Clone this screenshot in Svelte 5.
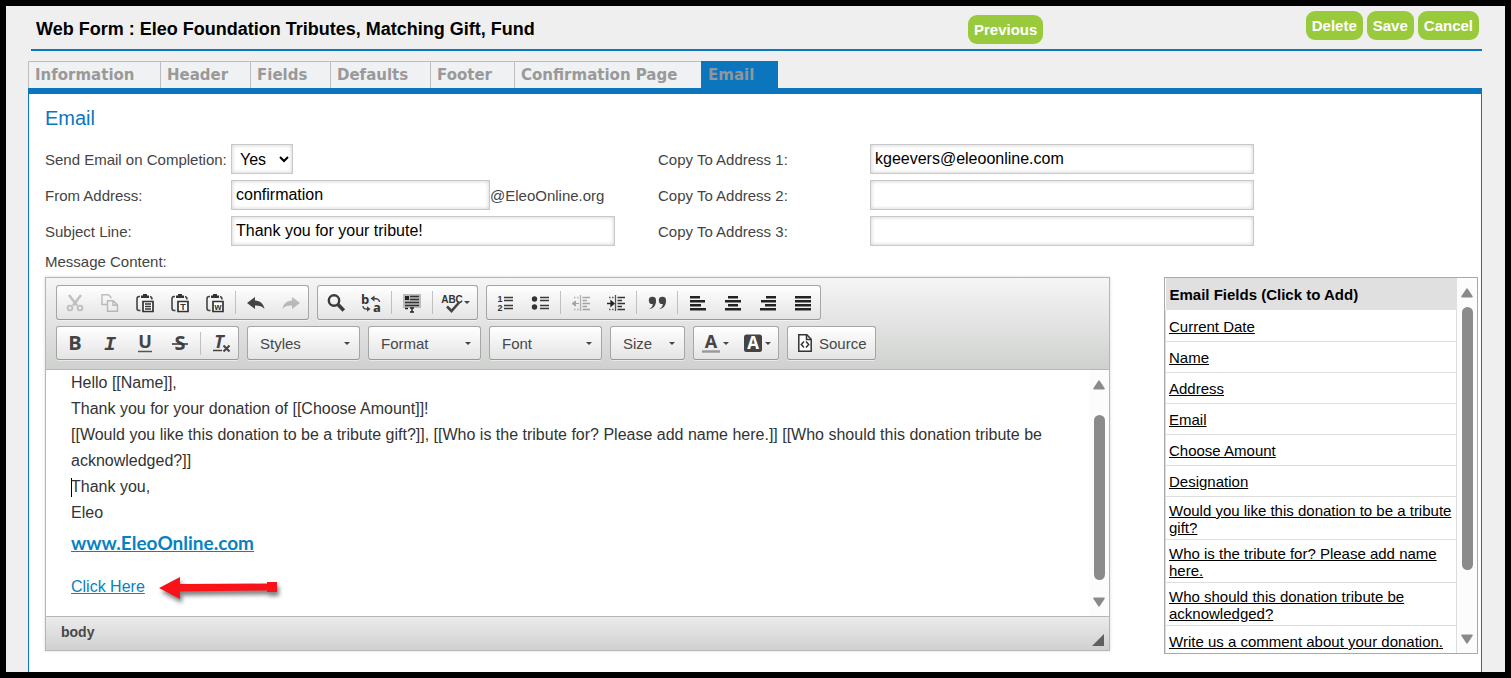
<script>
  const tabs = ['Information', 'Header', 'Fields', 'Defaults', 'Footer', 'Confirmation Page', 'Email'];
  const widths = [132, 90, 80, 100, 84, 187, 77];
  const fields = [
    'Current Date',
    'Name',
    'Address',
    'Email',
    'Choose Amount',
    'Designation',
    'Would you like this donation to be a tribute gift?',
    'Who is the tribute for? Please add name here.',
    'Who should this donation tribute be acknowledged?',
    'Write us a comment about your donation.'
  ];
  const aligns = [
    { name: 'Align left', rows: [[2, 10], [2, 15], [2, 11], [2, 16]] },
    { name: 'Center', rows: [[5, 10], [2, 16], [5, 10], [2, 16]] },
    { name: 'Align right', rows: [[8, 10], [3, 15], [7, 11], [2, 16]] },
    { name: 'Justify', rows: [[2, 16], [2, 16], [2, 16], [2, 16]] }
  ];
  const combos = ['Styles', 'Format', 'Font', 'Size'];
  const copies = [
    { id: 'copy1', label: 'Copy To Address 1:', value: 'kgeevers@eleoonline.com' },
    { id: 'copy2', label: 'Copy To Address 2:', value: '' },
    { id: 'copy3', label: 'Copy To Address 3:', value: '' }
  ];
  const tribute =
    '[[Would you like this donation to be a tribute gift?]], [[Who is the tribute for? Please add name here.]] [[Who should this donation tribute be acknowledged?]]';
</script>

{#snippet sep()}<span class="sep"></span>{/snippet}

{#snippet clipboard()}
  <path d="M5 3.5H4.2Q2 3.5 2 6v9q0 2.5 2 2.5h1.5M15 3.5q2 .3 2 3" fill="none" stroke="#444" stroke-width="1.6" />
  <path d="M6 5V2.6h2V1h4v1.6h2V5z" fill="#333" />
{/snippet}

{#snippet scrollbar()}
  <div class="scrollbar" aria-hidden="true">
    <svg width="12" height="10" viewBox="0 0 12 10"><path d="M6 1.2 11 8.6H1z" fill="#8a8a8a" stroke="#8a8a8a" stroke-width="1.6" stroke-linejoin="round" /></svg>
    <span class="thumb"></span>
    <svg width="12" height="10" viewBox="0 0 12 10"><path d="M1 1.4h10L6 8.8z" fill="#8a8a8a" stroke="#8a8a8a" stroke-width="1.6" stroke-linejoin="round" /></svg>
  </div>
{/snippet}

<div class="page">
  <header>
    <h1>Web Form : Eleo Foundation Tributes, Matching Gift, Fund</h1>
    <div class="middle"><button class="pill">Previous</button></div>
    <div class="actions">
      <button class="pill">Delete</button>
      <button class="pill">Save</button>
      <button class="pill">Cancel</button>
    </div>
  </header>

  <nav>
    {#each tabs as tab, i}
      <a href="#{tab}" class:active={tab === 'Email'} style="width: {widths[i]}px">{tab}</a>
    {/each}
  </nav>

  <main>
    <h2>Email</h2>
    <div class="form">
      <div class="rows">
        <div class="row">
          <label for="send">Send Email on Completion:</label>
          <select id="send"><option>Yes</option><option>No</option></select>
        </div>
        <div class="row">
          <label for="from">From Address:</label>
          <input id="from" class="short" value="confirmation" /><span>@EleoOnline.org</span>
        </div>
        <div class="row">
          <label for="subject">Subject Line:</label>
          <input id="subject" value="Thank you for your tribute!" />
        </div>
      </div>
      <div class="rows copies">
        {#each copies as c}
          <div class="row">
            <label for={c.id}>{c.label}</label>
            <input id={c.id} value={c.value} />
          </div>
        {/each}
      </div>
    </div>
    <div class="caption" id="message-label">Message Content:</div>

    <div class="work">
      <section class="editor">
        <div class="toolbar">
          <div class="tools">
            <div class="group">
              <button aria-label="Cut" class="off">
                <svg viewBox="0 0 20 20"><path d="M4 2l8 10.500M16 2 8 12.500" fill="none" stroke="#777" stroke-width="2.600" /><circle cx="5" cy="15" r="2.400" fill="none" stroke="#777" stroke-width="1.800" /><circle cx="15" cy="15" r="2.400" fill="none" stroke="#777" stroke-width="1.800" /></svg>
              </button>
              <button aria-label="Copy" class="off">
                <svg viewBox="0 0 20 20"><path d="M7 11.500H2V1.700h6.500L11.500 5M7.500 7.700h5.700l4.300 4.200v6.400h-10zM13 8v4.200h4.300" fill="none" stroke="#666" stroke-width="1.400" /></svg>
              </button>
              <button aria-label="Paste">
                <svg viewBox="0 0 20 20">{@render clipboard()}<path d="M8 8.500h10v10H8z" fill="#fff" stroke="#333" stroke-width="1.700" /><path d="M10 11h6M10 13.500h6M10 16h6" stroke="#333" stroke-width="1.300" /></svg>
              </button>
              <button aria-label="Paste as plain text">
                <svg viewBox="0 0 20 20">{@render clipboard()}<path d="M8 8.500h10v10H8z" fill="#fff" stroke="#333" stroke-width="1.700" /><text x="13" y="17" class="tiny">T</text></svg>
              </button>
              <button aria-label="Paste from Word">
                <svg viewBox="0 0 20 20">{@render clipboard()}<path d="M8 8.500h10v10H8z" fill="#fff" stroke="#333" stroke-width="1.700" /><text x="13" y="17" class="tiny">w</text></svg>
              </button>
              {@render sep()}
              <button aria-label="Undo">
                <svg viewBox="0 0 20 20"><path d="M1 10 9 4v3.600c5 .2 8.500 3 9.500 8.400C16 13 13 12.300 9 12.400V16z" fill="#444" /></svg>
              </button>
              <button aria-label="Redo" class="off">
                <svg viewBox="0 0 20 20"><path d="M19 10 11 4v3.600c-5 .2-8.500 3-9.500 8.400C4 13 7 12.300 11 12.400V16z" fill="#666" /></svg>
              </button>
            </div>

            <div class="group">
              <button aria-label="Find">
                <svg viewBox="0 0 20 20"><circle cx="8" cy="7.500" r="5.200" fill="none" stroke="#3c3c3c" stroke-width="2.400" /><path d="M12 11.500l5.800 6" stroke="#3c3c3c" stroke-width="3.600" /></svg>
              </button>
              <button aria-label="Replace">
                <svg viewBox="0 0 20 20"><text x="4" y="11" class="swap">b</text><text x="16" y="19" class="swap">a</text><path d="M9.500 5.500l4-3v6zM9.500 16 6 13.200v5.600z" fill="#444" /><path d="M18.500 9c0-3-3-3.600-6-3.500M2 13c0 3 2 3.200 5 3" fill="none" stroke="#444" stroke-width="1.400" /></svg>
              </button>
              {@render sep()}
              <button aria-label="Select all">
                <svg viewBox="0 0 20 20"><path d="M1 1h18v14H1z" fill="#bbb" /><path d="M3 3h4v4H3z" fill="#222" /><path d="M8 3.500h9M8 6.500h9M3 9.500h14M3 12.500h14" stroke="#333" stroke-width="1.500" /><path d="M8 15h4M8 19h4M10 15v4M3 15.500h3" stroke="#222" stroke-width="1.400" /></svg>
              </button>
              {@render sep()}
              <button aria-label="Spell check" class="wide">
                <svg viewBox="0 0 20 20"><text x="10" y="10" class="abc">ABC</text><path d="M5 13.500l4.500 4.500L17.500 9" fill="none" stroke="#444" stroke-width="2.600" /></svg>
                <i class="down"></i>
              </button>
            </div>

            <div class="group">
              <button aria-label="Numbered list">
                <svg viewBox="0 0 20 20"><text x="5" y="9" class="num">1</text><text x="5" y="18" class="num">2</text><path d="M9 4.500h9M9 7.500h9M9 12.500h9M9 15.500h9" stroke="#3a3a3a" stroke-width="1.700" /></svg>
              </button>
              <button aria-label="Bulleted list">
                <svg viewBox="0 0 20 20"><circle cx="4.500" cy="6" r="2.700" fill="#333" /><circle cx="4.500" cy="14" r="2.700" fill="#333" /><path d="M10 4.500h9M10 7.500h9M10 12.500h9M10 15.500h9" stroke="#3a3a3a" stroke-width="1.700" /></svg>
              </button>
              {@render sep()}
              {#each ['Decrease indent', 'Increase indent'] as name, i}
                <button aria-label={name} class:off={i === 0}>
                  <svg viewBox="0 0 20 20"><path d="M9.500 2v16" stroke="#555" stroke-width="1.300" /><path d="M11.500 4.500H19M11.500 7.500h4.500M11.500 10.500H19M11.500 13.500h4.500M11.500 16.500H19" stroke="#333" stroke-width="1.300" /><path d="M3 4.500h5M3 16.500h5" stroke="#555" stroke-width="1.300" stroke-dasharray="1.500 1.500" />{#if i === 0}<path d="M3 10.500h5M1 10.500l3.500-2.500v5z" fill="#333" stroke="#333" stroke-width="1" />{:else}<path d="M1 10.500h5M8 10.500 5 8v5z" fill="#222" stroke="#222" stroke-width="1.300" />{/if}</svg>
                </button>
              {/each}
              {@render sep()}
              <button aria-label="Block quote">
                <svg viewBox="0 0 20 20"><path d="M2 16c2.500-1 3.700-2.700 3.800-5A3.600 3.600 0 1 1 9 7.500c.2 5-2.500 8-7 8.500zM12 16c2.500-1 3.700-2.700 3.800-5A3.600 3.600 0 1 1 19 7.500c.2 5-2.500 8-7 8.500z" fill="#444" /></svg>
              </button>
              {@render sep()}
              {#each aligns as a}
                <button aria-label={a.name}>
                  <svg viewBox="0 0 20 20">{#each a.rows as [x, w], r}<rect {x} y={3 + r * 4} width={w} height="2.500" fill="#222" />{/each}</svg>
                </button>
              {/each}
            </div>
          </div>

          <div class="tools">
            <div class="group">
              <button aria-label="Bold"><svg viewBox="0 0 20 20"><text x="10" y="17" class="glyph">B</text></svg></button>
              <button aria-label="Italic"><svg viewBox="0 0 20 20"><text x="10" y="17" class="glyph italic">I</text></svg></button>
              <button aria-label="Underline"><svg viewBox="0 0 20 20"><text x="10" y="15" class="glyph under">U</text><path d="M3 18.500h14" stroke="#555" stroke-width="1.500" /></svg></button>
              <button aria-label="Strikethrough"><svg viewBox="0 0 20 20"><text x="10" y="17" class="glyph">S</text><path d="M2 11h16" stroke="#333" stroke-width="1.500" /></svg></button>
              {@render sep()}
              <button aria-label="Remove format"><svg viewBox="0 0 20 20"><text x="8" y="15" class="glyph slanted">T</text><path d="M2 17.500h9" stroke="#444" stroke-width="1.500" /><path d="M12.500 12.500l6 6M18.500 12.500l-6 6" stroke="#444" stroke-width="2" /></svg></button>
            </div>
            {#each combos as c}
              <button class="combo" class:small={c === 'Size'}><span>{c}</span><i class="down"></i></button>
            {/each}
            <div class="group">
              <button aria-label="Text color" class="wide">
                <svg viewBox="0 0 20 20"><text x="10" y="15" class="glyph under">A</text><path d="M1 18.500h18" stroke="#999" stroke-width="2.400" /></svg><i class="down"></i>
              </button>
              <button aria-label="Background color" class="wide">
                <svg viewBox="0 0 20 20"><rect x="1" y="1.500" width="18" height="17.500" rx="2.500" fill="#444" /><text x="10" y="16" class="glyph light">A</text></svg><i class="down"></i>
              </button>
            </div>
            <button class="source">
              <svg viewBox="0 0 20 20"><path d="M3.800 1.800h8l4.400 4.400v12H3.800z" fill="#fff" stroke="#333" stroke-width="1.500" /><path d="M11.500 2v4.500H16M9 8.500 6.300 11.500 9 14.500M11 8.500l2.700 3-2.700 3" fill="none" stroke="#333" stroke-width="1.500" /></svg>
              <span>Source</span>
            </button>
          </div>
        </div>

        <div class="canvas">
          <div class="body" role="textbox" tabindex="0" aria-labelledby="message-label">
            <p>Hello [[Name]],</p>
            <p>Thank you for your donation of [[Choose Amount]]!</p>
            <p>{tribute}</p>
            <p class="caret">Thank you,</p>
            <p>Eleo</p>
            <p class="site"><a href="#site">www.EleoOnline.com</a></p>
            <p class="click">
              <a href="#click">Click Here</a>
              <svg width="128" height="34" viewBox="0 0 128 34" aria-hidden="true">
                <path d="M4 18 25 7v7L112 13.500V12h10v10h-10v-1.500L25 21.500V29z" fill="#fa1219" />
              </svg>
            </p>
          </div>
          {@render scrollbar()}
        </div>
        <footer>
          <span>body</span>
          <svg width="12" height="12" viewBox="0 0 12 12" aria-hidden="true"><path d="M12 0v12H0z" fill="#606060" /></svg>
        </footer>
      </section>

      <aside>
        <table>
          <thead><tr><th scope="col">Email Fields (Click to Add)</th></tr></thead>
          <tbody>
            {#each fields as f}
              <tr><td><a href="#add">{f}</a></td></tr>
            {/each}
          </tbody>
        </table>
        {@render scrollbar()}
      </aside>
    </div>
  </main>
</div>

<style>
  :global(body) { background: #000; }
  * { box-sizing: border-box; }
  .page {
    display: flex;
    flex-direction: column;
    min-height: 100vh;
    border: 6px solid #000;
    padding: 0 23px 0 22px;
    background: #efefef;
    font: 15px/17px "Liberation Sans", Arial, sans-serif;
    color: #444;
  }
  header {
    display: grid;
    grid-template-columns: 937px 1fr auto;
    height: 45px;
    margin-left: 3px;
    border-bottom: 2px solid #0b75bd;
  }
  h1 {
    margin: 0;
    padding: 12px 0 0 5px;
    font-size: 18px;
    line-height: 22px;
    color: #000;
    white-space: nowrap;
  }
  .middle { padding-top: 9px; }
  .actions { display: flex; gap: 4px; padding: 5px 3px 0 0; }
  .pill {
    height: 29px;
    padding: 0 6px;
    border: 0;
    border-radius: 9px;
    background: #99ca3c;
    color: #fff;
    font: bold 15px/29px "Liberation Sans", Arial, sans-serif;
  }
  nav { display: flex; margin-top: 10px; }
  nav a {
    height: 27px;
    padding-left: 6px;
    border: 1px solid #bdbdbd;
    border-width: 1px 0 0 1px;
    background: #f0f1f3;
    color: #999;
    font: bold 15px/26px "DejaVu Sans", Verdana, sans-serif;
    text-decoration: none;
    white-space: nowrap;
  }
  nav a.active { border-color: #0b75bd; background: #0b75bd; color: #8e979d; }
  main {
    flex: 1;
    border: 1px solid #0b75bd;
    border-width: 6px 1px 0;
    background: #fff;
    padding: 12px 3px 18px 16px;
  }
  h2 { margin: 0 0 14px; font-size: 20px; line-height: 24px; font-weight: 400; color: #0b75bd; }
  .form { display: flex; gap: 43px; }
  .rows { display: grid; gap: 6px; }
  .row { display: flex; align-items: center; height: 30px; }
  .row label { width: 186px; }
  .row.row label { flex: none; }
  .copies label { width: 212px; }
  input, select {
    height: 30px;
    width: 384px;
    border: 1px solid #c8c8c8;
    border-radius: 0;
    background: #fff;
    box-shadow: inset 0 0 4px #ccc;
    padding: 0 4px 1px;
    font: 16px "Liberation Sans", Arial, sans-serif;
    color: #000;
  }
  .short { width: 259px; }
  select { width: 62px; padding: 0 4px; }
  .caption { padding: 7px 0; }
  .work { display: flex; align-items: flex-start; gap: 54px; }

  .editor { flex: 1; border: 1px solid #b6b6b6; box-shadow: 0 0 3px rgba(0, 0, 0, 0.15); }
  .toolbar {
    display: grid;
    gap: 6px;
    padding: 7px 10px 9px;
    border-bottom: 1px solid #b6b6b6;
    background: linear-gradient(#f5f5f5, #cfd1cf);
  }
  .tools { display: flex; gap: 8px; height: 35px; }
  .tools + .tools { height: 34px; }
  .group, .combo, .source {
    display: flex;
    align-items: center;
    border: 1px solid #a6a6a6;
    border-bottom-color: #979797;
    border-radius: 3px;
    background: linear-gradient(#fff, #e4e4e4);
    box-shadow: 0 1px 0 rgba(255, 255, 255, 0.5);
  }
  .group button {
    display: flex;
    align-items: center;
    justify-content: center;
    width: 35px;
    height: 32px;
    padding: 0;
    border: 0;
    background: none;
  }
  .group .wide { width: 42px; gap: 2px; }
  .group svg, .source svg { width: 20px; height: 20px; overflow: visible; }
  .off svg { opacity: 0.4; }
  .sep { width: 1px; height: 23px; margin: 0 2px 0 3px; background: #c0c0c0; }
  .down { border: 3px solid transparent; border-top-color: #444; border-bottom: 0; }
  .combo, .source { color: #474747; font: 15px "Liberation Sans", Arial, sans-serif; }
  .combo { justify-content: space-between; width: 113px; padding: 0 9px 0 12px; }
  .combo.small { width: 75px; }
  .source { gap: 4px; padding: 0 8px 0 7px; }
  text { text-anchor: middle; fill: #333; font-family: "Liberation Sans", Arial, sans-serif; font-weight: bold; }
  .tiny { font-size: 9px; }
  .swap { font: bold 13px "Open Sans", sans-serif; }
  .abc { font-size: 10px; }
  .num { font-size: 9px; }
  .glyph { font: bold 20px "Open Sans", sans-serif; fill: #444; }
  .glyph.under { font-size: 18px; }
  .glyph.italic { font: italic bold 20px "Liberation Mono", monospace; }
  .glyph.slanted { font: italic bold 18px "Open Sans", sans-serif; }
  .glyph.light { font-size: 17px; fill: #fff; }

  .canvas { display: flex; background: #fff; }
  .body { flex: 1; height: 246px; padding: 0 20px 0 25px; font-size: 16px; line-height: 26px; color: #333; }
  .body p { margin: 0; }
  .body a { color: #0782c1; }
  .caret { background: linear-gradient(#000, #000) 0 60% / 1px 19px no-repeat; }
  .site { padding-top: 4px; font: bold 19px/26px Lato, "Open Sans", sans-serif; }
  .body .click { display: flex; align-items: center; gap: 10px; margin-top: 14px; }
  .click svg { filter: drop-shadow(2px 4px 2px rgba(0, 0, 0, 0.5)); }

  .scrollbar {
    display: flex;
    flex-direction: column;
    align-items: center;
    width: 20px;
    padding: 10px 0 9px;
    background: #fcfcfc;
  }
  .thumb { flex: 1; width: 11px; margin: 25px 0 17px; border-radius: 6px; background: #8b8b8b; }
  footer {
    display: flex;
    align-items: center;
    justify-content: space-between;
    height: 34px;
    padding: 0 5px 2px 15px;
    border-top: 1px solid #b6b6b6;
    background: linear-gradient(#ebebeb, #cfd1cf);
    font-size: 14px;
    font-weight: bold;
    color: #484848;
  }
  footer svg { align-self: flex-end; margin-bottom: 2px; }

  aside { display: flex; width: 314px; height: 377px; overflow: hidden; border: 1px solid #a9a9a9; }
  table { flex: 1; border-collapse: collapse; }
  th { height: 32px; padding: 0 4px; background: #e0e0e0; color: #000; text-align: left; }
  td { height: 31px; padding: 5px 3px 3px; border: 1px solid #ddd; border-top: 0; }
  td a { color: #000; }
  aside .thumb { margin: 9px 0 64px; }
</style>
